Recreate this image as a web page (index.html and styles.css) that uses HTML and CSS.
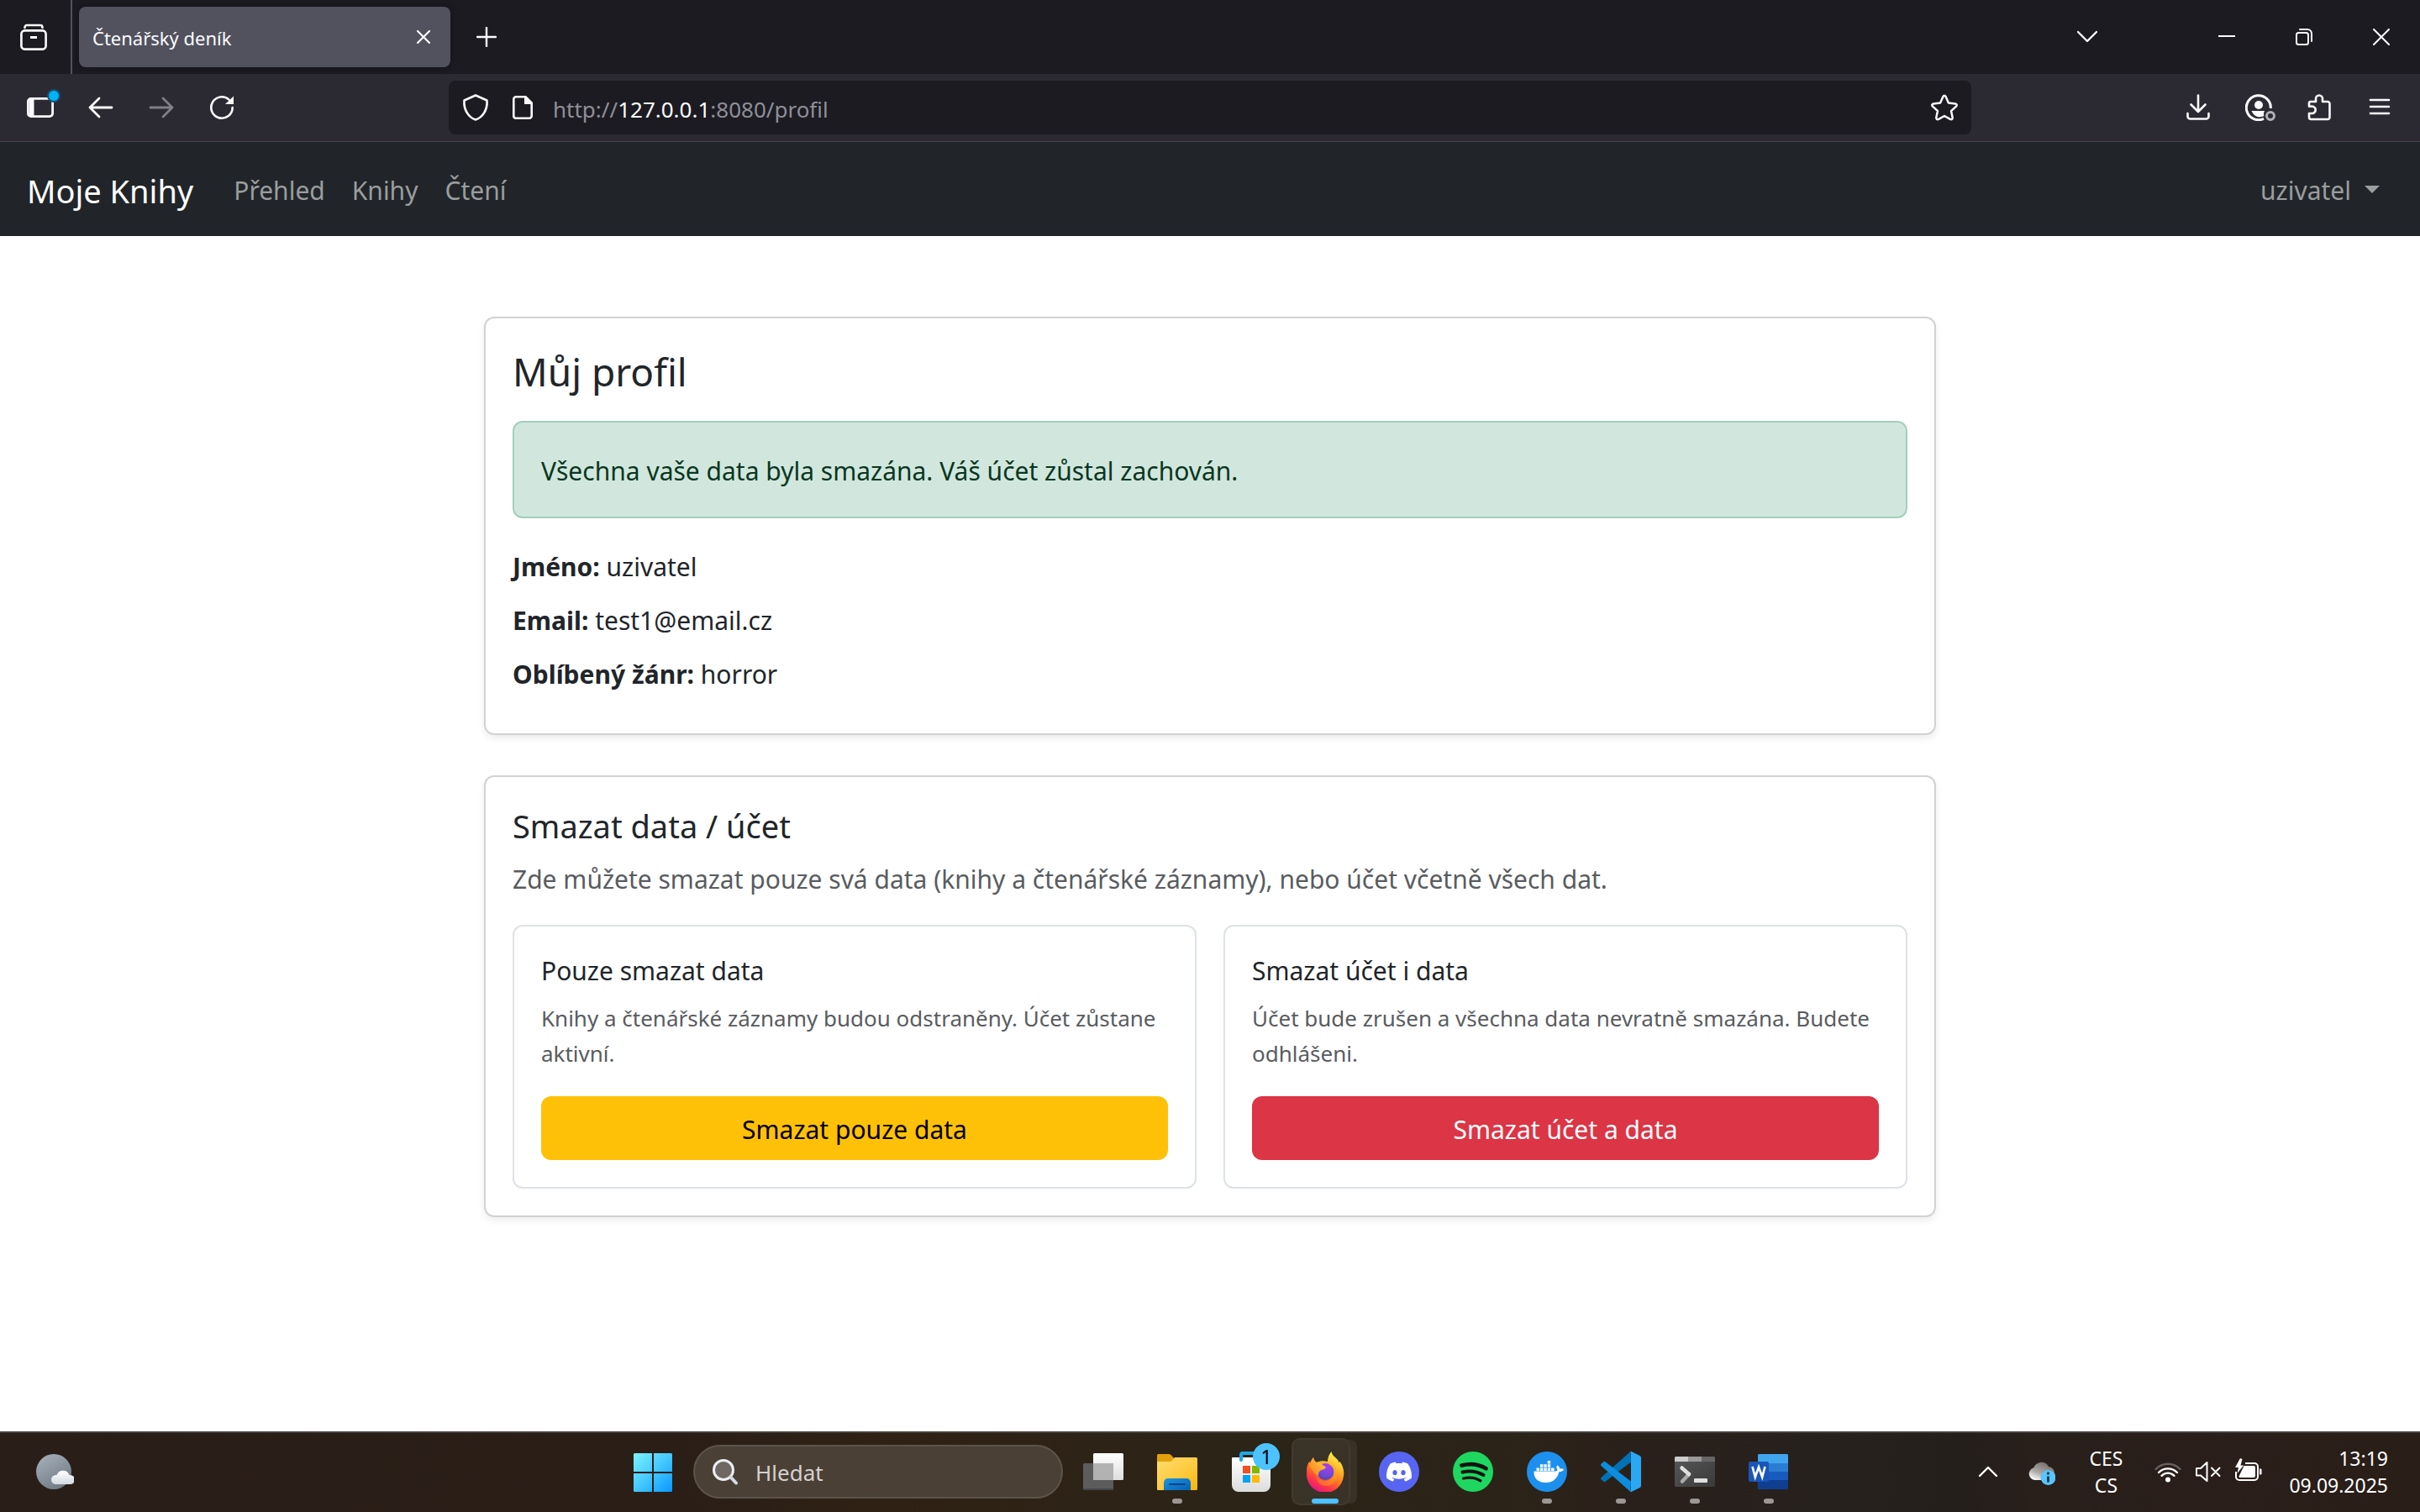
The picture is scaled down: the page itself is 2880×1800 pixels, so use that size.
FILE: index.html
```html
<!DOCTYPE html>
<html lang="cs">
<head>
<meta charset="utf-8">
<meta name="viewport" content="width=device-width, initial-scale=1">
<title>Čtenářský deník</title>
<link rel="stylesheet" href="styles.css">
</head>
<body>
<div class="screen">

<header class="browser">
  <div class="tabstrip">
    <button class="view-btn" aria-label="Firefox View">
      <svg class="icon" viewBox="0 0 32 32"><path d="M5.500 5C5.500 3 6.500 2 8 2h16c1.500 0 2.500 1 2.500 3" fill="none" stroke="currentColor" stroke-width="2.600" stroke-linecap="round"/><rect x="1.400" y="8.400" width="29.200" height="22.200" rx="4" fill="none" stroke="currentColor" stroke-width="2.600"/><path d="M12 16.500h8" stroke="currentColor" stroke-width="3"/></svg>
    </button>
    <div class="tab">
      <span class="tab-title">Čtenářský deník</span>
      <button class="tab-close" aria-label="Zavřít panel">
        <svg class="icon-16" viewBox="0 0 16 16"><path d="M1 1l14 14M15 1L1 15" stroke="currentColor" stroke-width="2.200" stroke-linecap="round"/></svg>
      </button>
    </div>
    <button class="new-tab" aria-label="Nový panel">
      <svg class="icon-24" viewBox="0 0 24 24"><path d="M12 1v22M1 12h22" stroke="currentColor" stroke-width="2.400" stroke-linecap="round"/></svg>
    </button>
    <button class="tool-btn tabs-menu" aria-label="Seznam panelů">
      <svg class="icon-24" viewBox="0 0 24 24"><path d="M1 6l11 11L23 6" fill="none" stroke="currentColor" stroke-width="2.400" stroke-linecap="round" stroke-linejoin="round"/></svg>
    </button>
    <div class="window-controls">
      <button class="win-btn" aria-label="Minimalizovat"><svg class="icon-20" viewBox="0 0 20 20"><path d="M0 9h20" stroke="currentColor" stroke-width="2"/></svg></button>
      <button class="win-btn" aria-label="Obnovit"><svg class="icon-20" viewBox="0 0 20 20"><rect x="1" y="5" width="14" height="14" rx="2.500" fill="none" stroke="currentColor" stroke-width="2"/><path d="M5 1h9a5 5 0 0 1 5 5v9" fill="none" stroke="currentColor" stroke-width="2" stroke-linecap="round"/></svg></button>
      <button class="win-btn" aria-label="Zavřít"><svg class="icon-20" viewBox="0 0 20 20"><path d="M1 1l18 18M19 1L1 19" stroke="currentColor" stroke-width="2" stroke-linecap="round"/></svg></button>
    </div>
  </div>

  <div class="toolbar">
    <div class="tools">
      <button class="tool-btn" aria-label="Postranní lišta">
        <svg class="icon" viewBox="0 0 32 32"><rect x="1.400" y="5.400" width="29.200" height="21.200" rx="3.500" fill="none" stroke="currentColor" stroke-width="2.800"/><path d="M3 5h5.500v22H3z" fill="currentColor"/></svg>
        <span class="notice"></span>
      </button>
      <button class="tool-btn" aria-label="Zpět"><svg class="icon" viewBox="0 0 32 32"><path d="M3 16h26M14 5L3 16l11 11" fill="none" stroke="currentColor" stroke-width="2.800" stroke-linecap="round" stroke-linejoin="round"/></svg></button>
      <button class="tool-btn muted" aria-label="Vpřed" disabled><svg class="icon" viewBox="0 0 32 32"><path d="M29 16H3M18 5l11 11-11 11" fill="none" stroke="currentColor" stroke-width="2.800" stroke-linecap="round" stroke-linejoin="round"/></svg></button>
      <button class="tool-btn" aria-label="Obnovit stránku"><svg class="icon" viewBox="0 0 32 32"><path d="M28.700 16A12.700 12.700 0 1 1 24.500 6.600" fill="none" stroke="currentColor" stroke-width="2.600" stroke-linecap="round"/><path d="M30 2.500v9.500H20z" fill="currentColor"/></svg></button>
    </div>
    <div class="urlbar">
      <svg class="icon" viewBox="0 0 32 32"><path d="M16 1.500L29.500 7.500C30.500 19 24 28 16 30.500 8 28 1.500 19 2.500 7.500z" fill="none" stroke="currentColor" stroke-width="2.600" stroke-linejoin="round"/></svg>
      <svg class="icon" viewBox="0 0 32 32"><path d="M8 3.300h11.500L26.700 10.500V26a2.700 2.700 0 0 1-2.700 2.700H8A2.700 2.700 0 0 1 5.300 26V6A2.700 2.700 0 0 1 8 3.300z" fill="none" stroke="currentColor" stroke-width="2.600"/><path d="M18 2.500V12h9.500z" fill="currentColor"/></svg>
      <div class="url" role="textbox" aria-label="Adresa" contenteditable="true" spellcheck="false">http://<span class="host">127.0.0.1</span>:8080/profil</div>
      <button class="star-btn" aria-label="Přidat záložku"><svg class="icon" viewBox="0 0 32 32"><path d="M14.300 3.200Q16 .4 17.700 3.200l3.200 7.300 8 .9q3 .8 1.100 3.200l-6 5.500 1.700 7.900q0 3-2.900 1.900L16 26l-6.800 3.900q-2.900 1.100-2.900-1.900L8 20.100l-6-5.500q-1.900-2.400 1.100-3.200l8-.9z" fill="none" stroke="currentColor" stroke-width="2.500" stroke-linejoin="round"/></svg></button>
    </div>
    <div class="tools tools-end">
      <button class="tool-btn" aria-label="Stahování"><svg class="icon" viewBox="0 0 32 32"><path d="M16 1.500V20M7.500 12.500L16 21l8.500-8.500M3.500 23v3.500a3 3 0 0 0 3 3h19a3 3 0 0 0 3-3V23" fill="none" stroke="currentColor" stroke-width="2.600" stroke-linecap="round" stroke-linejoin="round"/></svg></button>
      <button class="tool-btn" aria-label="Účet"><svg class="icon icon-wide" viewBox="0 0 36 32"><path d="M22 29.300A14.500 14.500 0 1 1 30.300 17" fill="none" stroke="currentColor" stroke-width="3"/><circle cx="16" cy="13" r="5" fill="currentColor"/><path d="M7.500 20h15.500c-1 2-1.500 3.500-.5 6-6 3-12 1-15-6z" fill="currentColor"/><circle cx="30" cy="26" r="4.500" fill="none" stroke="#b1b1b6" stroke-width="3"/></svg></button>
      <button class="tool-btn" aria-label="Rozšíření"><svg class="icon" viewBox="0 0 32 32"><path d="M4 10.500a1.500 1.500 0 0 1 1.500-1.500H12V5.500a4 4 0 0 1 8 0V9h6a2.500 2.500 0 0 1 2.500 2.500v16A2.500 2.500 0 0 1 26 30H6.500A2.500 2.500 0 0 1 4 27.500V23h3.500a4.200 4.200 0 0 0 0-8.400H4z" fill="none" stroke="currentColor" stroke-width="2.600" stroke-linejoin="round"/></svg></button>
      <button class="tool-btn" aria-label="Nabídka"><svg class="icon" viewBox="0 0 32 32"><path d="M5 7h22M5 15h22M5 23h22" stroke="currentColor" stroke-width="2.600" stroke-linecap="round"/></svg></button>
    </div>
  </div>
</header>

<div class="viewport">
  <nav class="navbar">
    <a class="brand" href="#">Moje Knihy</a>
    <a class="nav-link" href="#">Přehled</a>
    <a class="nav-link" href="#">Knihy</a>
    <a class="nav-link" href="#">Čtení</a>
    <button class="user-menu" aria-haspopup="true">uzivatel<span class="caret"></span></button>
  </nav>

  <main class="content">
    <section class="card">
      <h1 class="card-title">Můj profil</h1>
      <div class="alert" role="alert">Všechna vaše data byla smazána. Váš účet zůstal zachován.</div>
      <p class="field"><strong>Jméno:</strong> uzivatel</p>
      <p class="field"><strong>Email:</strong> test1@email.cz</p>
      <p class="field"><strong>Oblíbený žánr:</strong> horror</p>
    </section>

    <section class="card">
      <h2 class="section-title">Smazat data / účet</h2>
      <p class="lead">Zde můžete smazat pouze svá data (knihy a čtenářské záznamy), nebo účet včetně všech dat.</p>
      <div class="options">
        <form class="option">
          <h3 class="option-title">Pouze smazat data</h3>
          <p class="option-text">Knihy a čtenářské záznamy budou odstraněny. Účet zůstane aktivní.</p>
          <button class="btn btn-warning" type="button">Smazat pouze data</button>
        </form>
        <form class="option">
          <h3 class="option-title">Smazat účet i data</h3>
          <p class="option-text">Účet bude zrušen a všechna data nevratně smazána. Budete odhlášeni.</p>
          <button class="btn btn-danger" type="button">Smazat účet a data</button>
        </form>
      </div>
    </section>
  </main>
</div>

<footer class="taskbar">
  <div class="widgets">
    <button class="widget-btn" aria-label="Počasí">
      <svg class="app-icon" viewBox="0 0 48 48"><defs><linearGradient id="moon" x1="0" y1="0" x2=".6" y2="1"><stop offset="0" stop-color="#a9b2bd"/><stop offset="1" stop-color="#727c86"/></linearGradient><linearGradient id="cloud" x1="0" y1="0" x2="0" y2="1"><stop offset="0" stop-color="#fff"/><stop offset="1" stop-color="#d3dae2"/></linearGradient></defs><circle cx="24" cy="24" r="21" fill="url(#moon)"/><path d="M26.500 39a5.500 5.500 0 0 1 0-11h1a8 8 0 0 1 15 0h1a5.500 5.500 0 0 1 0 11z" fill="url(#cloud)"/></svg>
    </button>
  </div>

  <div class="apps">
    <button class="app" aria-label="Start">
      <svg class="app-icon" viewBox="0 0 48 48"><defs><linearGradient id="win" x1="0" y1="0" x2="1" y2="1"><stop offset="0" stop-color="#7df4ff"/><stop offset=".5" stop-color="#45c8fd"/><stop offset="1" stop-color="#0a97ff"/></linearGradient></defs><path d="M2.500 2H23v22H1V3.500A1.500 1.500 0 0 1 2.500 2zM25 2h20.500A1.500 1.500 0 0 1 47 3.500V24H25zM1 26h22v22H2.500A1.500 1.500 0 0 1 1 46.500zM25 26h22v20.500a1.500 1.500 0 0 1-1.500 1.500H25z" fill="url(#win)"/></svg>
    </button>
    <label class="search">
      <svg class="icon" viewBox="0 0 32 32"><circle cx="14" cy="14" r="11.500" fill="#6f6761" stroke="#eceef2" stroke-width="3"/><path d="M22.500 22.500L29 29.500" stroke="#d5dbe4" stroke-width="4" stroke-linecap="round"/></svg>
      <input class="search-input" type="search" placeholder="Hledat" aria-label="Hledat">
    </label>
    <button class="app" aria-label="Zobrazení úkolů">
      <svg class="app-icon" viewBox="0 0 48 48"><defs><linearGradient id="tv" x1="0" y1="0" x2="0" y2="1"><stop offset="0" stop-color="#fff"/><stop offset="1" stop-color="#dedede"/></linearGradient></defs><rect x="12" y="2" width="36" height="32" rx="1.500" fill="url(#tv)"/><rect x="0" y="14" width="36" height="32" rx="1.500" fill="#5c5c5c"/><path d="M12 14h24v20H12z" fill="#b2b2b2"/><path d="M0 44h36v1a1 1 0 0 1-1 1H1a1 1 0 0 1-1-1z" fill="#44474b"/></svg>
    </button>
    <button class="app running" aria-label="Průzkumník souborů">
      <svg class="app-icon" viewBox="0 0 48 48"><defs><linearGradient id="fold" x1="0" y1="0" x2="1" y2="1"><stop offset="0" stop-color="#ffdc6e"/><stop offset=".6" stop-color="#fdc93b"/><stop offset="1" stop-color="#f5b30a"/></linearGradient><linearGradient id="foldb" x1="0" y1="0" x2="1" y2="1"><stop offset="0" stop-color="#1f94e0"/><stop offset="1" stop-color="#0360b4"/></linearGradient></defs><path d="M0 4.500A1.500 1.500 0 0 1 1.500 3H13c2 0 3 .5 4 1.500L21 9v6H0z" fill="#e2a10c"/><path d="M0 12h14c2 0 3-.5 4-1.500L21 7h25.500A1.500 1.500 0 0 1 48 8.500v36a1.500 1.500 0 0 1-1.500 1.500h-45A1.500 1.500 0 0 1 0 44.500z" fill="url(#fold)"/><path d="M8 46V37a5 5 0 0 1 5-5h22a5 5 0 0 1 5 5v9z" fill="url(#foldb)"/><path d="M15 39h18" stroke="#0a4585" stroke-width="2" stroke-linecap="round"/></svg>
    </button>
    <button class="app" aria-label="Microsoft Store">
      <svg class="app-icon" viewBox="0 0 48 48"><defs><linearGradient id="bag" x1="0" y1="0" x2="0" y2="1"><stop offset="0" stop-color="#fff"/><stop offset="1" stop-color="#dcdcdc"/></linearGradient></defs><path d="M12 10V4a2 2 0 0 1 2-2h20a2 2 0 0 1 2 2v6" fill="none" stroke="#1ba9ea" stroke-width="4"/><path d="M1 8a1 1 0 0 1 1-1h44a1 1 0 0 1 1 1v32a8 8 0 0 1-8 8H9a8 8 0 0 1-8-8z" fill="url(#bag)"/><path d="M10 7h4v3a2 2 0 0 1-4 0z" fill="#18a5e8"/><path d="M14 17h9v9h-9z" fill="#f25022"/><path d="M25 17h9v9h-9z" fill="#7fba00"/><path d="M14 28h9v9h-9z" fill="#00a4ef"/><path d="M25 28h9v9h-9z" fill="#ffb900"/></svg>
      <span class="badge">1</span>
    </button>
    <button class="app active" aria-label="Firefox">
      <svg class="app-icon" viewBox="0 0 48 48"><defs><linearGradient id="fx" x1=".8" y1=".05" x2=".3" y2="1"><stop offset="0" stop-color="#fff44f"/><stop offset=".3" stop-color="#ffb827"/><stop offset=".55" stop-color="#ff7a1f"/><stop offset=".78" stop-color="#ff3647"/><stop offset="1" stop-color="#e31587"/></linearGradient><linearGradient id="fxh" x1="1" y1="0" x2="0" y2="1"><stop offset="0" stop-color="#ffd43a"/><stop offset="1" stop-color="#ff7a26"/></linearGradient><radialGradient id="fxg" cx=".6" cy=".2" r=".9"><stop offset="0" stop-color="#a93cf0"/><stop offset=".6" stop-color="#7049d8"/><stop offset="1" stop-color="#4b4399"/></radialGradient></defs><path d="M27 12C27 6 30 2 31.500 0c.5 4.500 5 7 8 10.500 0 0 .5 1.500.5 2.500l1.500-1c4 5.500 5.500 11.500 4.500 17A22 22 0 0 1 2 25c-.4-5.500 1-10 3.500-13.500L6 14l4-7c.5 3 1.500 4.500 3.500 6 4-2 9-2.500 13.500-1z" fill="url(#fx)"/><circle cx="24.500" cy="24" r="10" fill="url(#fxg)"/><path d="M10 7c.5 3 1.500 4.500 4 6 3 0 5 .5 6.500 2.500 1.500 1.500 3.500 2 4.500 3-1 3-5 3-7 4.500-2.500 2-1.500 4.500-2.500 6-5-3-7-8-10-11 0-4 2-8 4.500-11z" fill="url(#fxh)"/><path d="M27 12c4 1 7 4 8 8-2-3-5-4.500-8-5 5 2 7.500 5.500 7.500 10 0 6-5 10-10.500 10-5 0-9-3-10.500-7-.5 8 5 13 11.500 13 8 0 14-6.500 13.500-14.500C38 20 34 14 27 12z" fill="#ff9f2b" opacity=".45"/></svg>
    </button>
    <button class="app" aria-label="Discord">
      <svg class="app-icon" viewBox="0 0 48 48"><circle cx="24" cy="24" r="24" fill="#5865f2"/><path transform="translate(9 9) scale(1.250)" fill="#fff" d="M20.317 4.3698a19.7913 19.7913 0 00-4.8851-1.5152.0741.0741 0 00-.0785.0371c-.211.3753-.4447.8648-.6083 1.2495-1.8447-.2762-3.68-.2762-5.4868 0-.1636-.3933-.4058-.8742-.6177-1.2495a.077.077 0 00-.0785-.037 19.7363 19.7363 0 00-4.8852 1.515.0699.0699 0 00-.0321.0277C.5334 9.0458-.319 13.5799.0992 18.0578a.0824.0824 0 00.0312.0561c2.0528 1.5076 4.0413 2.4228 5.9929 3.0294a.0777.0777 0 00.0842-.0276c.4616-.6304.8731-1.2952 1.226-1.9942a.076.076 0 00-.0416-.1057c-.6528-.2476-1.2743-.5495-1.8722-.8923a.077.077 0 01-.0076-.1277c.1258-.0943.2517-.1923.3718-.2914a.0743.0743 0 01.0776-.0105c3.9278 1.7933 8.18 1.7933 12.0614 0a.0739.0739 0 01.0785.0095c.1202.099.246.1981.3728.2924a.077.077 0 01-.0066.1276 12.2986 12.2986 0 01-1.873.8914.0766.0766 0 00-.0407.1067c.3604.698.7719 1.3628 1.225 1.9932a.076.076 0 00.0842.0286c1.961-.6067 3.9495-1.5219 6.0023-3.0294a.077.077 0 00.0313-.0552c.5004-5.177-.8382-9.6739-3.5485-13.6604a.061.061 0 00-.0312-.0286zM8.02 15.3312c-1.1825 0-2.1569-1.0857-2.1569-2.419 0-1.3332.9555-2.4189 2.157-2.4189 1.2108 0 2.1757 1.0952 2.1568 2.419 0 1.3332-.9555 2.4189-2.1569 2.4189zm7.9748 0c-1.1825 0-2.1569-1.0857-2.1569-2.419 0-1.3332.9554-2.4189 2.1569-2.4189 1.2108 0 2.1757 1.0952 2.1568 2.419 0 1.3332-.946 2.4189-2.1568 2.4189Z"/></svg>
    </button>
    <button class="app" aria-label="Spotify">
      <svg class="app-icon" viewBox="0 0 48 48"><circle cx="24" cy="24" r="24" fill="#1ed760"/><path d="M10.500 16.500C20 14 31 15 39.500 20.200" fill="none" stroke="#121212" stroke-width="4.800" stroke-linecap="round"/><path d="M11.500 24.500c8.500-2 17.500-.8 25 3.500" fill="none" stroke="#121212" stroke-width="4" stroke-linecap="round"/><path d="M12.500 32c7-1.600 14.500-.8 20.500 2.800" fill="none" stroke="#121212" stroke-width="3.200" stroke-linecap="round"/></svg>
    </button>
    <button class="app running" aria-label="Docker Desktop">
      <svg class="app-icon" viewBox="0 0 48 48"><circle cx="24" cy="24" r="24" fill="#1d90ed"/><path d="M8.500 23.500h25c2 0 3-1 3-2-1.500-2-1.500-3.500-.2-5 2 1 2.700 2.500 2.900 4 2-.5 3.500-.3 4.800.7-1 2.300-3 3-5.500 3C36 32.500 31 37 22.500 37 13 37 8 31.500 8.500 23.500z" fill="#fff"/><path d="M11.500 19.500H15V23h-3.500zM15.900 19.500h3.500V23h-3.500zM20.300 19.500h3.500V23h-3.500zM24.700 19.500h3.500V23h-3.500zM29.100 19.500h3.500V23h-3.500zM15.900 15.300h3.500v3.500h-3.500zM20.300 15.300h3.500v3.500h-3.500zM24.700 15.300h3.500v3.500h-3.500zM24.700 11.100h3.500v3.500h-3.500z" fill="#fff"/></svg>
    </button>
    <button class="app running" aria-label="Visual Studio Code">
      <svg class="app-icon" viewBox="0 0 48 48"><path d="M35.500 0L1 30.500c-1.300 1-1.300 2 0 3.200L3 35.600c1 .9 1.800.8 2.800 0L36 12.500z" fill="#0072b5"/><path d="M35.500 48L1 17.500c-1.300-1-1.300-2 0-3.200L3 12.400c1-.9 1.800-.8 2.800 0L36 35.500z" fill="#0d8ddb"/><path d="M35 .5c.4-.7 1.200-.6 2-.2l9.500 4.600A2.700 2.700 0 0 1 48 7.300v33.400a2.700 2.700 0 0 1-1.500 2.400L37 47.700c-.8.400-1.600.5-2-.2l1-1.500V2z" fill="#29a9f3"/></svg>
    </button>
    <button class="app running" aria-label="Terminál">
      <svg class="app-icon" viewBox="0 0 48 48"><defs><linearGradient id="term" x1="0" y1="0" x2="1" y2="1"><stop offset="0" stop-color="#585858"/><stop offset="1" stop-color="#3a3a3a"/></linearGradient></defs><rect y="6" width="48" height="36" rx="1.500" fill="url(#term)"/><path d="M0 12V7.500A1.500 1.500 0 0 1 1.500 6H16v6z" fill="#ccc"/><path d="M16 6h16v6H16z" fill="#999"/><path d="M32 6h14.500A1.500 1.500 0 0 1 48 7.500V12H32z" fill="#666"/><path d="M17 27l-8 8.500" stroke="#aaa" stroke-width="4.500" stroke-linecap="round"/><path d="M8.500 19.500L17 27" stroke="#dedede" stroke-width="4.500" stroke-linecap="round"/><rect x="23" y="32" width="16" height="5" rx="1" fill="#e0e0e0"/></svg>
    </button>
    <button class="app running" aria-label="Word">
      <svg class="app-icon" viewBox="0 0 48 48"><path d="M11 14V4.500A1.500 1.500 0 0 1 12.500 3h33A1.500 1.500 0 0 1 47 4.500V14z" fill="#41a5ee"/><path d="M11 14h36v10H11z" fill="#2b7cd3"/><path d="M11 24h36v10H11z" fill="#185abd"/><path d="M11 34h36v9.500a1.500 1.500 0 0 1-1.500 1.500h-33a1.500 1.500 0 0 1-1.500-1.500z" fill="#103f91"/><rect x="0" y="12" width="24" height="24" rx="2" fill="#1a55b8"/><path d="M4.500 18l3.300 12.500L12 18.500l4.200 12L19.500 18" fill="none" stroke="#fff" stroke-width="2.600"/></svg>
    </button>
  </div>

  <div class="tray">
    <button class="tray-btn tray-more" aria-label="Skryté ikony"><svg class="icon-24" viewBox="0 0 24 24"><path d="M2 17L12 7l10 10" fill="none" stroke="currentColor" stroke-width="2.400" stroke-linecap="round" stroke-linejoin="round"/></svg></button>
    <button class="tray-btn tray-cloud" aria-label="OneDrive"><svg class="icon" viewBox="0 0 32 32"><defs><linearGradient id="od" x1=".8" y1="0" x2=".2" y2="1"><stop offset="0" stop-color="#6d6764"/><stop offset=".6" stop-color="#aaa7a5"/><stop offset="1" stop-color="#fff"/></linearGradient></defs><path d="M8 26a7.500 7.500 0 0 1-1.500-14.800C9 4 20 2 24 10c6 1 8 6 6 11l-4 5z" fill="url(#od)"/><circle cx="23.500" cy="23" r="9" fill="#5ac4fb"/><path d="M23.500 16.500v3M23.500 21.500v7" stroke="#103a55" stroke-width="2.800"/></svg></button>
    <button class="tray-text tray-lang"><span>CES</span><span>CS</span></button>
    <button class="tray-btn tray-status" aria-label="Síť, zvuk, baterie">
      <svg class="icon" viewBox="0 0 32 32"><g fill="none" stroke="currentColor" stroke-linecap="round" stroke-width="2.400"><path d="M1.500 13a20 20 0 0 1 29 0" stroke="#68615e"/><path d="M5 17a15.500 15.500 0 0 1 22 0M8.500 20.800a10.500 10.500 0 0 1 15 0"/></g><circle cx="16" cy="25.500" r="3" fill="currentColor"/></svg>
      <svg class="icon" viewBox="0 0 32 32"><path d="M2 12v8.500h5l7.500 6.500V5L7 12zM20 11.500l9.500 9.500M29.500 11.500L20 21" fill="none" stroke="currentColor" stroke-width="2" stroke-linejoin="round" stroke-linecap="round"/></svg>
      <svg class="icon" viewBox="0 0 32 32"><path d="M12 6h11a4 4 0 0 1 4 4v12a4 4 0 0 1-4 4H5a4 4 0 0 1-4-4v-6" fill="none" stroke="currentColor" stroke-width="2"/><path d="M10.500 9H22a2 2 0 0 1 2 2v10a2 2 0 0 1-2 2H6c-1.500 0-2-1-1-2.500z" fill="currentColor"/><path d="M29 12.500h1.500a1 1 0 0 1 1 1v5a1 1 0 0 1-1 1H29zM6 0L0 11h4L2.500 18 10 8.500H6.500L8.500 1z" fill="currentColor"/></svg>
    </button>
    <button class="tray-text tray-clock"><span>13:19</span><span>09.09.2025</span></button>
  </div>
</footer>
</div>
</body>
</html>
```
FILE: styles.css
```css
* { box-sizing: border-box; }

body {
  margin: 0;
  font-family: "Noto Sans", "Open Sans", sans-serif;
  font-size: 30px;
  line-height: 48px;
  color: #212529;
  background: #fff;
}

button {
  padding: 0;
  border: 0;
  background: none;
  color: inherit;
  font: inherit;
}

h1, h2, h3, p { margin: 0; font-weight: 400; }
a { color: inherit; text-decoration: none; }
svg { display: block; flex: none; }

.screen { display: flex; flex-direction: column; min-height: 100vh; }

.icon { width: 32px; height: 32px; }
.icon-wide { width: 36px; margin-left: 4px; }
.icon-24 { width: 24px; height: 24px; }
.icon-20 { width: 20px; height: 20px; }
.icon-16 { width: 16px; height: 16px; }

/* Browser chrome */
.browser { color: #fbfbfe; font-size: 24px; line-height: 32px; }

.tabstrip { display: flex; height: 88px; background: #1c1b22; }

.view-btn {
  display: flex;
  align-items: center;
  padding: 0 28px 0 24px;
  border-right: 2px solid #52525e;
}

.tab {
  display: flex;
  align-items: center;
  justify-content: space-between;
  width: 442px;
  margin: 8px 0 8px 8px;
  padding: 0 8px 0 16px;
  border-radius: 8px;
  background: #52525e;
  box-shadow: 0 0 8px rgba(0, 0, 0, .4);
}

.tab-title { padding-top: 2px; font-size: 22px; }
.tab-close, .new-tab, .tool-btn, .win-btn { display: flex; align-items: center; justify-content: center; }
.tab-close { width: 48px; height: 48px; }
.new-tab { width: 86px; }
.tabs-menu { margin-left: auto; }
.window-controls { display: flex; margin-left: 84px; }
.win-btn { width: 92px; }

.toolbar {
  display: grid;
  grid-template-columns: 534px 1fr 534px;
  padding: 8px 0;
  border-bottom: 1px solid #42414d;
  background: #2b2a33;
}

.tools { display: flex; padding: 0 12px; }
.tools-end { justify-content: flex-end; }
.tool-btn { position: relative; width: 72px; }
.muted { color: #807f86; }

.notice {
  position: absolute;
  top: 12px;
  right: 14px;
  width: 12px;
  height: 12px;
  border-radius: 50%;
  background: #00b3f4;
  box-shadow: 0 0 0 2px #175070;
}

.urlbar {
  display: flex;
  align-items: center;
  gap: 24px;
  height: 64px;
  padding: 0 16px;
  border-radius: 8px;
  background: #1c1b22;
}

.url { flex: 1; margin-left: -4px; padding-top: 3px; outline: 0; font-size: 26px; color: #8f8f98; white-space: nowrap; }
.host { color: #fbfbfe; }

/* Page */
.viewport { flex: 1; }

.navbar {
  display: flex;
  align-items: center;
  padding: 18px 48px 14px 32px;
  background: #212529;
  color: #9b9d9f;
  line-height: 80px;
}

.brand { margin-right: 32px; color: #fff; font-size: 38px; }
.nav-link { padding: 0 16px; }
.user-menu { display: flex; align-items: center; gap: 16px; margin-left: auto; }
.caret { margin-bottom: 4px; border: 9px solid transparent; border-top-color: currentColor; border-bottom: 0; }

.content {
  display: flex;
  flex-direction: column;
  gap: 48px;
  width: 60%;
  margin: 0 auto;
  padding: 96px 0;
}

.card {
  padding: 34px 32px 32px;
  border: 2px solid #d2d2d2;
  border-radius: 12px;
  box-shadow: 0 4px 8px rgba(0, 0, 0, .075);
}

.card-title { margin-bottom: 30px; font-size: 46px; line-height: 58px; }

.alert {
  margin-bottom: 34px;
  padding: 34px 32px 30px;
  border: 2px solid #a3cfbb;
  border-radius: 12px;
  background: #d1e7dd;
  color: #0a3622;
}

.field { margin-bottom: 16px; }
.field:last-child { margin-bottom: 14px; }
.section-title { margin-bottom: 16px; font-size: 38px; }
.lead { margin-bottom: 30px; color: #595c5f; }
.options { display: grid; grid-template-columns: 1fr 1fr; gap: 32px; }

.option {
  display: flex;
  flex-direction: column;
  padding: 34px 32px 32px;
  border: 2px solid #dee2e6;
  border-radius: 12px;
}

.option-title { margin-bottom: 16px; font-size: 30px; line-height: 38px; }
.option-text { margin-bottom: 30px; font-size: 26px; line-height: 42px; color: #595c5f; }
.btn { padding: 16px 24px 12px; border-radius: 12px; }
.btn-warning { background: #ffc107; color: #000; }
.btn-danger { background: #dc3545; color: #fff; }

/* Taskbar */
.taskbar {
  display: grid;
  grid-template-columns: 1fr auto 1fr;
  height: 96px;
  padding-bottom: 2px;
  border-top: 2px solid #46413c;
  background: linear-gradient(90deg, #2a1f18, #2a1e17 28%, #2f2114 36%, #2c2417 50%, #2c2318 62%, #2a201b 68%, #26211d 76%, #241f1b 81%, #291f1b 84%, #2a1e18);
  color: #fff;
  font-size: 23px;
  line-height: 32px;
}

.widgets { display: flex; padding-left: 40px; }
.apps { display: flex; align-items: center; padding-left: 2px; }
.app-icon { width: 48px; height: 48px; }

.app {
  position: relative;
  display: flex;
  align-items: center;
  justify-content: center;
  width: 88px;
  height: 80px;
}

.running::after, .active::after {
  content: "";
  position: absolute;
  bottom: 2px;
  left: 38px;
  width: 12px;
  height: 6px;
  border-radius: 3px;
  background: #9d9794;
}

.active::after { left: 28px; width: 32px; background: #4cc2ff; }

.active::before {
  content: "";
  position: absolute;
  inset: 0 14px 0 4px;
  border: 2px solid #423a2f;
  border-radius: 10px;
  background: rgba(255, 255, 255, .07);
  box-shadow: 10px 0 0 -2px #393126;
}

.active .app-icon { position: relative; }

.badge {
  position: absolute;
  top: 6px;
  right: 10px;
  width: 32px;
  border-radius: 50%;
  background: #4cc2ff;
  color: #000;
}

.search {
  display: flex;
  align-items: center;
  gap: 20px;
  width: 440px;
  height: 64px;
  margin: 0 4px;
  padding: 0 20px;
  border: 2px solid #5c534a;
  border-radius: 32px;
  background: #4a4036;
}

.search-input {
  flex: 1;
  min-width: 0;
  padding: 2px 0 0;
  border: 0;
  outline: 0;
  background: none;
  color: #fff;
  font: inherit;
  font-size: 26px;
}

.search-input::placeholder { color: #d6d1cd; opacity: 1; }

.tray { display: flex; align-items: center; justify-content: flex-end; padding-right: 38px; }
.tray-btn, .tray-text { display: flex; }
.tray-text { flex-direction: column; }
.tray-more { margin-right: 36px; }
.tray-cloud { margin-right: 40px; }
.tray-lang { align-items: center; margin-right: 38px; }
.tray-status { gap: 16px; margin-right: 32px; }
.tray-clock { align-items: flex-end; }
```
